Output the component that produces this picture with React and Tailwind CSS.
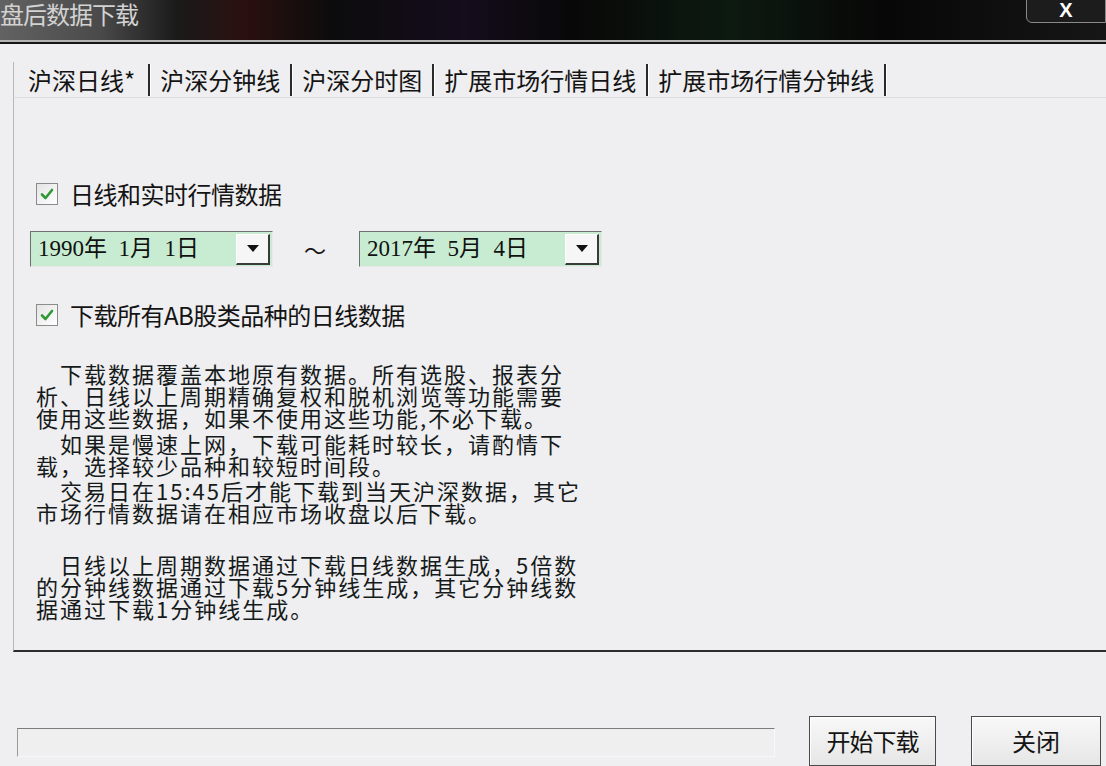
import React from 'react';

const Check = () => (
  <span className="w-[22px] h-[22px] border border-[#8b8b8b] bg-[linear-gradient(135deg,#e4e4e4,#ffffff)] flex items-center justify-center shrink-0">
    <svg width="16" height="16" viewBox="0 0 16 16">
      <path d="M3 8.5 L6.5 12 L13 4" fill="none" stroke="#2f9a35" strokeWidth="2.6" strokeLinecap="round" strokeLinejoin="round" />
    </svg>
  </span>
);

const DatePicker = ({ value }) => (
  <div className="h-[36px] w-[243px] border border-t-[#6f6f6f] border-l-[#6f6f6f] border-r-[#e8e8e8] border-b-[#e8e8e8] bg-[#c8ecd2] flex items-center justify-between pl-[7px] pr-[2px]">
    <span className="text-[23px] text-[#111] whitespace-pre font-['Liberation_Serif','Noto_Sans_CJK_SC',serif]">{value}</span>
    <span className="w-[34px] h-[31px] bg-[#f6f6f6] border-r-2 border-b-2 border-[#3a3a3a] border-l border-t border-l-white border-t-white flex items-center justify-center">
      <svg width="12" height="8" viewBox="0 0 12 8"><path d="M0 0 H12 L6 7 Z" fill="#111" /></svg>
    </span>
  </div>
);

const tabs = ['沪深日线*', '沪深分钟线', '沪深分时图', '扩展市场行情日线', '扩展市场行情分钟线'];

const lines = [
  ['　下载数据覆盖本地原有数据。所有选股、报表分', '析、日线以上周期精确复权和脱机浏览等功能需要', '使用这些数据，如果不使用这些功能,不必下载。'],
  ['　如果是慢速上网，下载可能耗时较长，请酌情下', '载，选择较少品种和较短时间段。'],
  ['　交易日在15:45后才能下载到当天沪深数据，其它', '市场行情数据请在相应市场收盘以后下载。'],
  ['　日线以上周期数据通过下载日线数据生成，5倍数', '的分钟线数据通过下载5分钟线生成，其它分钟线数', '据通过下载1分钟线生成。'],
];
const groupMargins = ['mt-0', 'mt-[4px]', 'mt-[3px]', 'mt-[30px]'];

export default function App() {
  return (
    <div className="w-[1106px] h-[766px] overflow-hidden bg-[#efeef0] flex flex-col font-['Noto_Sans_CJK_SC',sans-serif] text-[#141414]">
      {/* title bar */}
      <div className="h-[40px] relative bg-[linear-gradient(90deg,#626262_0%,#4a4a4a_9%,#1a1a1a_16%,#2b1010_22%,#0c0c0c_30%,#150c1c_42%,#080808_52%,#0d1a10_66%,#070707_80%,#161616_100%)] flex items-start">
        <span className="text-[24px] leading-[28px] text-[#d2d2d2] tracking-[-1px]">盘后数据下载</span>
        <span className="absolute right-0 top-[-4px] w-[80px] h-[27px] border border-[#8a8a8a] rounded-bl-[6px] bg-[#1c1c1c] flex items-center justify-center text-white font-bold text-[20px] leading-none font-['Liberation_Sans',sans-serif]">X</span>
      </div>
      <div className="h-[2px] bg-[#b4b4b4]" />
      <div className="h-[2px] bg-[#151515]" />

      {/* tabs */}
      <div className="mt-[18px] ml-[13px] h-[36px] flex items-center border-l border-[#b8b8b8]">
        {tabs.map((t, i) => (
          <div key={t} className="flex items-center h-full">
            <span className={`text-[24px] leading-none ${i === 0 ? 'ml-[14px] mr-[13px]' : 'ml-[9px] mr-[10px]'}`}>{t}</span>
            <span className="w-[3px] h-[32px] border-l-2 border-[#2a2a2a] border-r border-r-white" />
          </div>
        ))}
      </div>

      {/* panel */}
      <div className="ml-[13px] h-[558px] border-l border-t border-l-[#b8b8b8] border-t-[#dcdcdc] border-b-2 border-b-[#2c2c2c] flex flex-col pl-[22px]">
        <div className="mt-[84px] flex items-center h-[24px]">
          <Check />
          <span className="ml-[12px] text-[24px] leading-none tracking-[-0.5px]">日线和实时行情数据</span>
        </div>
        <div className="mt-[25px] flex items-center ml-[-6px]">
          <DatePicker value="1990年  1月  1日" />
          <span className="ml-[31px] mr-[33px] text-[22px] leading-none">～</span>
          <DatePicker value="2017年  5月  4日" />
        </div>
        <div className="mt-[36px] flex items-center h-[24px]">
          <Check />
          <span className="ml-[12px] text-[24px] leading-none tracking-[-0.5px]">下载所有AB股类品种的日线数据</span>
        </div>
        <div className="mt-[35px] text-[22px] leading-[22px] tracking-[2px] text-[#151a1a]">
          {lines.map((g, i) => (
            <div key={i} className={groupMargins[i]}>
              {g.map((l) => (
                <div key={l} className="whitespace-nowrap">{l}</div>
              ))}
            </div>
          ))}
        </div>
      </div>

      {/* bottom */}
      <div className="mt-[64px] flex items-start">
        <div className="ml-[17px] mt-[12px] w-[758px] h-[29px] border border-t-[#7c7c7c] border-l-[#9a9a9a] border-r-[#f8f8f8] border-b-[#f8f8f8] bg-[#efeff0]" />
        <button className="ml-[34px] w-[127px] h-[50px] border border-[#4a4a4a] bg-[linear-gradient(#f8f8f8,#e6e6e6)] text-[24px] tracking-[-1px] shadow-[inset_1px_1px_0_#fff]">开始下载</button>
        <button className="ml-[35px] w-[130px] h-[50px] border border-[#4a4a4a] bg-[linear-gradient(#f8f8f8,#e6e6e6)] text-[24px] shadow-[inset_1px_1px_0_#fff]">关闭</button>
      </div>
    </div>
  );
}
